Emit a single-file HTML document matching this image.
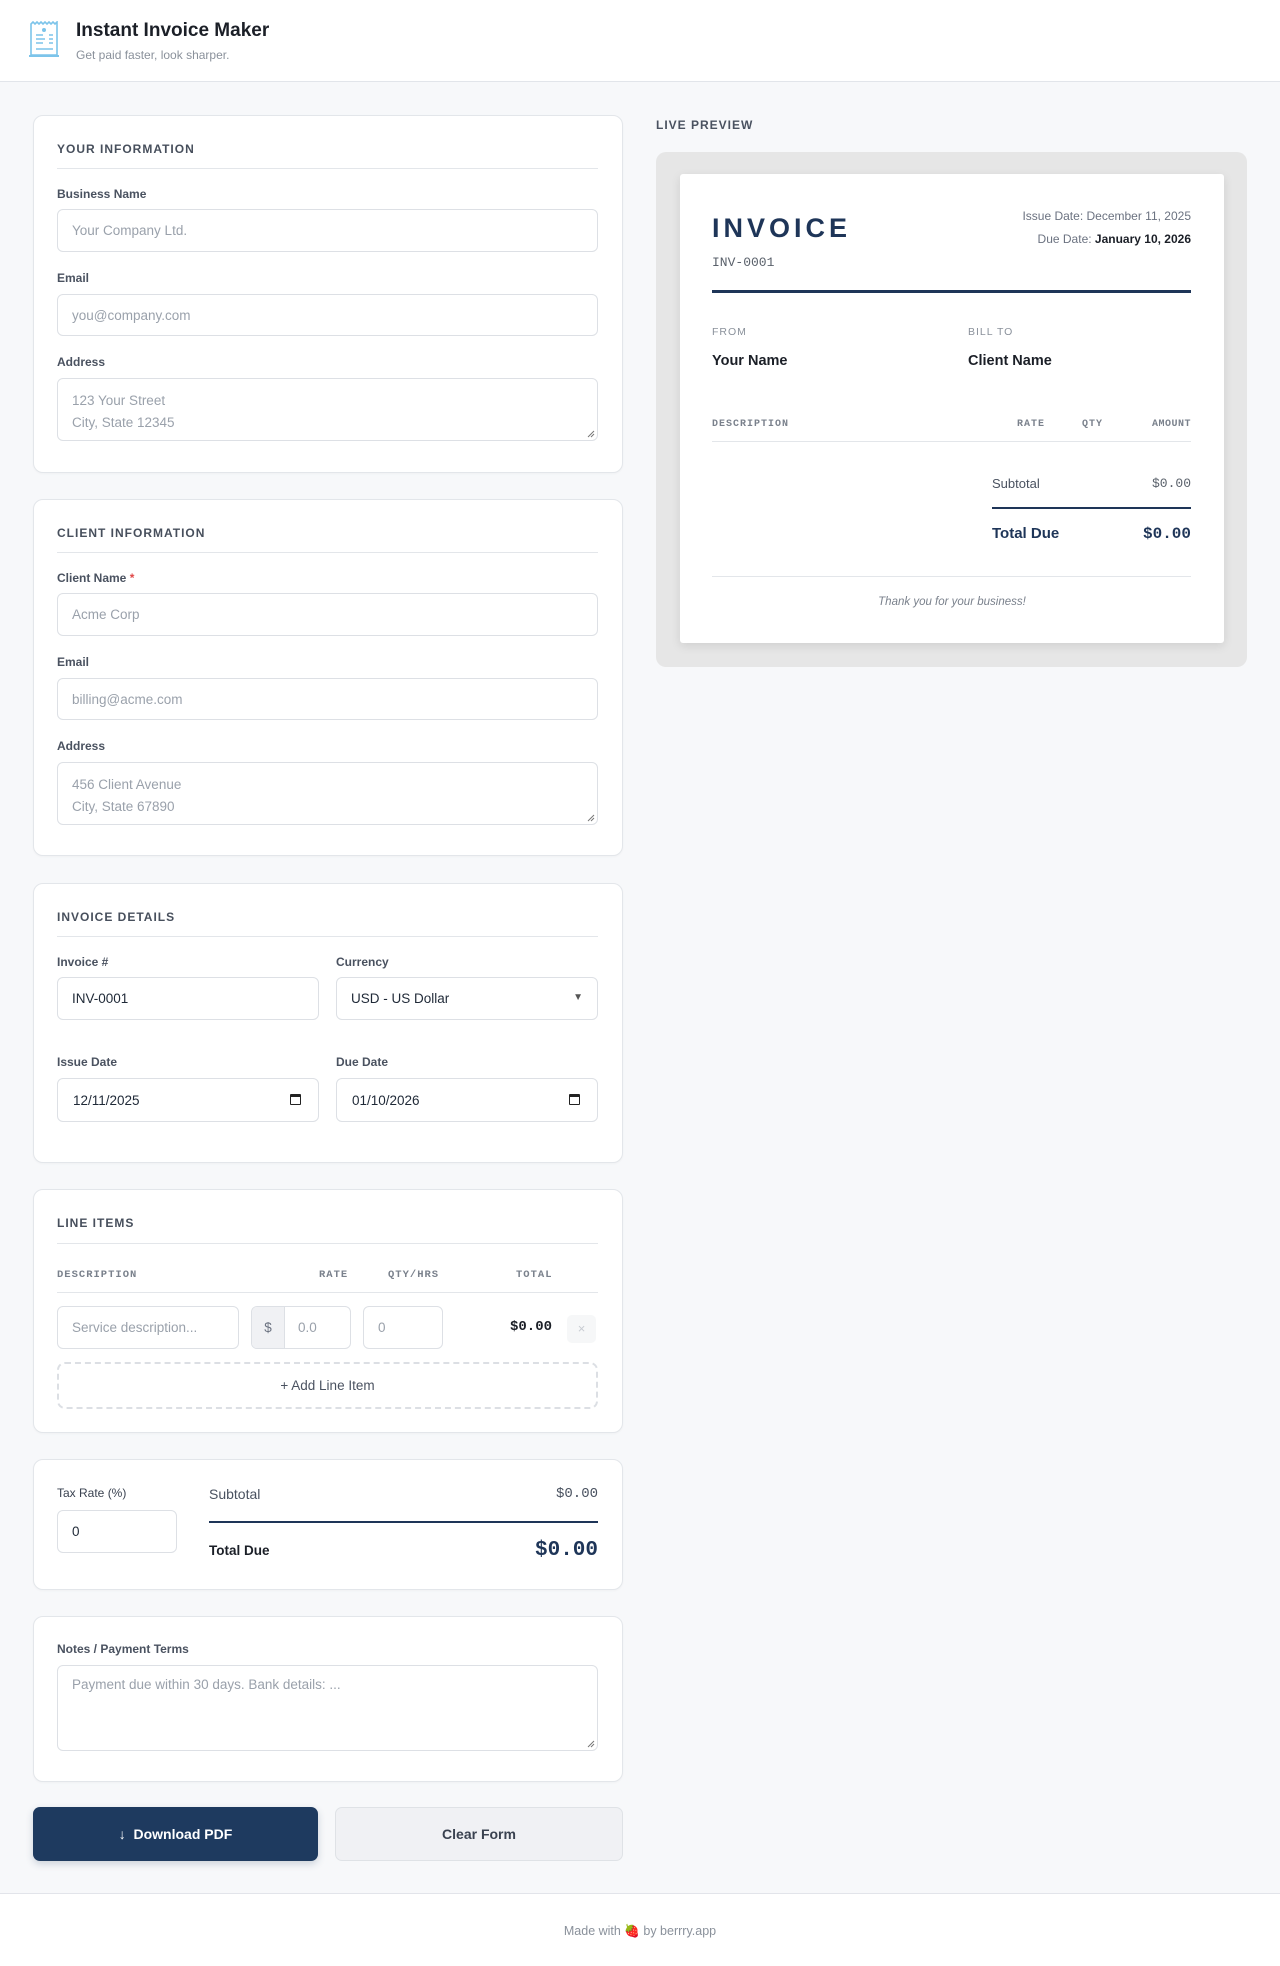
<!DOCTYPE html>
<html><head><meta charset="utf-8"><style>
*{box-sizing:border-box;margin:0;padding:0}
body{width:1280px;height:1966px;background:#f7f8fa;font-family:"Liberation Sans",sans-serif;position:relative;overflow:hidden;color:#1f2937}
.a{position:absolute;white-space:nowrap}
.hdr{position:absolute;left:0;top:0;width:1280px;height:82px;background:#fff;border-bottom:1px solid #e2e5ea}
.card{position:absolute;left:33px;width:590px;background:#fff;border:1px solid #e3e6ea;border-radius:10px;box-shadow:0 1px 2px rgba(0,0,0,.03)}
.st{position:absolute;left:57px;font-size:12px;font-weight:bold;letter-spacing:1px;color:#474f5c;line-height:20px}
.ul{position:absolute;left:57px;width:541px;height:1px;background:#e3e6ea}
.lb{position:absolute;font-size:12px;font-weight:bold;color:#4a5260;line-height:18px}
.in{position:absolute;background:#fff;border:1px solid #dde0e5;border-radius:6px;font-size:13.5px;color:#9aa1ab;padding-left:14px;display:flex;align-items:center}
.v{color:#1f2937}
.mono{font-family:"Liberation Mono",monospace}
.th{position:absolute;font-family:"Liberation Mono",monospace;font-size:10.5px;font-weight:bold;letter-spacing:1px;color:#7a818c;line-height:14px}
.grip{position:absolute;right:2px;bottom:2px}
</style></head><body>
<div class="hdr"></div>
<svg class="a" style="left:28px;top:21px" width="32" height="38" viewBox="0 0 32 38"><path d="M3 3 L5 1 L7 3 L9 1 L11 3 L13 1 L15 3 L17 1 L19 3 L21 1 L23 3 L25 1 L27 3 L29 1 L29 34 L3 34 Z" fill="#fff" stroke="#7cc4ea" stroke-width="1.6"/><circle cx="16" cy="9" r="2" fill="#7cc4ea"/><path d="M8 14h7M8 18h9M8 22h7M21 14h4M21 18h4M21 22h4M8 28h17" stroke="#7cc4ea" stroke-width="1.4"/><path d="M1 35h30" stroke="#7cc4ea" stroke-width="2"/></svg>
<div class="a" style="left:76px;top:19px;font-size:19px;font-weight:bold;color:#1b1f27;line-height:24px">Instant Invoice Maker</div>
<div class="a" style="left:76px;top:47px;font-size:12px;color:#8a919b;line-height:16px">Get paid faster, look sharper.</div>

<div class="card" style="top:115px;height:358px"></div>
<div class="st" style="top:139px">YOUR INFORMATION</div>
<div class="ul" style="top:168px"></div>
<div class="lb" style="left:57px;top:185px">Business Name</div>
<div class="in" style="left:57px;top:209px;width:541px;height:43px">Your Company Ltd.</div>
<div class="lb" style="left:57px;top:269px">Email</div>
<div class="in" style="left:57px;top:294px;width:541px;height:42px">you@company.com</div>
<div class="lb" style="left:57px;top:353px">Address</div>
<div class="in" style="left:57px;top:378px;width:541px;height:63px;align-items:flex-start;padding-top:11px;line-height:22px">123 Your Street<br>City, State 12345<svg class="grip" width="8" height="8"><path d="M1 7L7 1M4 7L7 4" stroke="#777" stroke-width="1"/></svg></div>

<div class="card" style="top:499px;height:357px"></div>
<div class="st" style="top:523px">CLIENT INFORMATION</div>
<div class="ul" style="top:552px"></div>
<div class="lb" style="left:57px;top:569px">Client Name <span style="color:#e04848">*</span></div>
<div class="in" style="left:57px;top:593px;width:541px;height:43px">Acme Corp</div>
<div class="lb" style="left:57px;top:653px">Email</div>
<div class="in" style="left:57px;top:678px;width:541px;height:42px">billing@acme.com</div>
<div class="lb" style="left:57px;top:737px">Address</div>
<div class="in" style="left:57px;top:762px;width:541px;height:63px;align-items:flex-start;padding-top:11px;line-height:22px">456 Client Avenue<br>City, State 67890<svg class="grip" width="8" height="8"><path d="M1 7L7 1M4 7L7 4" stroke="#777" stroke-width="1"/></svg></div>

<div class="card" style="top:883px;height:280px"></div>
<div class="st" style="top:907px">INVOICE DETAILS</div>
<div class="ul" style="top:936px"></div>
<div class="lb" style="left:57px;top:953px">Invoice #</div>
<div class="lb" style="left:336px;top:953px">Currency</div>
<div class="in v" style="left:57px;top:977px;width:262px;height:43px">INV-0001</div>
<div class="in v" style="left:336px;top:977px;width:262px;height:43px">USD - US Dollar<span style="position:absolute;right:14px;top:14px;font-size:10px;color:#555">▼</span></div>
<div class="lb" style="left:57px;top:1053px">Issue Date</div>
<div class="lb" style="left:336px;top:1053px">Due Date</div>
<div class="in v" style="left:57px;top:1078px;width:262px;height:44px;padding-left:15px">12/11/2025<span style="position:absolute;right:17px;top:15px;width:11px;height:11px;border:1.5px solid #222;border-top-width:3px;border-radius:1px"></span></div>
<div class="in v" style="left:336px;top:1078px;width:262px;height:44px;padding-left:15px">01/10/2026<span style="position:absolute;right:17px;top:15px;width:11px;height:11px;border:1.5px solid #222;border-top-width:3px;border-radius:1px"></span></div>

<div class="card" style="top:1189px;height:244px"></div>
<div class="st" style="top:1213px">LINE ITEMS</div>
<div class="ul" style="top:1243px"></div>
<div class="th" style="left:57px;top:1268px">DESCRIPTION</div>
<div class="th" style="left:319px;top:1268px">RATE</div>
<div class="th" style="left:388px;top:1268px">QTY/HRS</div>
<div class="th" style="left:516px;top:1268px">TOTAL</div>
<div class="ul" style="top:1292px"></div>
<div class="in" style="left:57px;top:1306px;width:182px;height:43px">Service description...</div>
<div class="in" style="left:251px;top:1306px;width:100px;height:43px;padding-left:0;overflow:hidden"><span style="width:33px;height:100%;background:#f0f1f4;border-right:1px solid #dde0e5;display:flex;align-items:center;justify-content:center;color:#6b7280">$</span><span style="padding-left:13px">0.0</span></div>
<div class="in" style="left:363px;top:1306px;width:80px;height:43px">0</div>
<div class="a mono" style="left:510px;top:1318px;font-size:14px;font-weight:bold;color:#1b1f27;line-height:18px">$0.00</div>
<div class="a" style="left:567px;top:1315px;width:29px;height:28px;background:#f6f7f8;border-radius:5px;color:#c8ccd2;font-size:13px;text-align:center;line-height:28px">×</div>
<div class="a" style="left:57px;top:1362px;width:541px;height:47px;border:2px dashed #dcdfe4;border-radius:8px;text-align:center;line-height:43px;font-size:13.5px;color:#4a5260">+ Add Line Item</div>

<div class="card" style="top:1459px;height:131px"></div>
<div class="lb" style="left:57px;top:1484px;font-weight:normal;color:#3a4250">Tax Rate (%)</div>
<div class="in v" style="left:57px;top:1510px;width:120px;height:43px">0</div>
<div class="a" style="left:209px;top:1485px;font-size:14px;color:#4a5260;line-height:18px">Subtotal</div>
<div class="a mono" style="right:682px;top:1485px;font-size:14px;color:#4a5260;line-height:18px">$0.00</div>
<div class="a" style="left:209px;top:1521px;width:389px;height:2px;background:#1e3558"></div>
<div class="a" style="left:209px;top:1542px;font-size:13.5px;font-weight:bold;color:#1b1f27;line-height:18px">Total Due</div>
<div class="a mono" style="right:682px;top:1538px;font-size:21px;font-weight:bold;color:#1e3558;line-height:26px">$0.00</div>

<div class="card" style="top:1616px;height:166px"></div>
<div class="lb" style="left:57px;top:1640px">Notes / Payment Terms</div>
<div class="in" style="left:57px;top:1665px;width:541px;height:86px;align-items:flex-start;padding-top:11px">Payment due within 30 days. Bank details: ...<svg class="grip" width="8" height="8"><path d="M1 7L7 1M4 7L7 4" stroke="#777" stroke-width="1"/></svg></div>

<div class="a" style="left:33px;top:1807px;width:285px;height:54px;background:#1e3a5f;border-radius:7px;color:#fff;font-size:14px;font-weight:bold;text-align:center;line-height:54px;box-shadow:0 3px 8px rgba(30,58,95,.2)">↓&nbsp; Download PDF</div>
<div class="a" style="left:335px;top:1807px;width:288px;height:54px;background:#f0f1f4;border:1px solid #dfe2e6;border-radius:7px;color:#3a4250;font-size:14px;font-weight:bold;text-align:center;line-height:52px">Clear Form</div>

<div class="a" style="left:0;top:1893px;width:1280px;height:73px;background:#fff;border-top:1px solid #e2e4ea"></div>
<div class="a" style="left:0;top:1922px;width:1280px;text-align:center;font-size:12.5px;color:#8a919b;line-height:18px">Made with <span style="color:#d33">🍓</span> by berrry.app</div>

<div class="a" style="left:656px;top:116px;font-size:12px;font-weight:bold;letter-spacing:1px;color:#4a5260;line-height:18px">LIVE PREVIEW</div>
<div class="a" style="left:656px;top:152px;width:591px;height:515px;background:#e6e6e6;border-radius:10px"></div>
<div class="a" style="left:680px;top:174px;width:544px;height:469px;background:#fff;border-radius:3px;box-shadow:0 3px 10px rgba(0,0,0,.1)"></div>
<div class="a" style="left:712px;top:211px;font-size:27px;font-weight:bold;letter-spacing:4px;color:#1e3558;line-height:34px">INVOICE</div>
<div class="a mono" style="left:712px;top:255px;font-size:13px;color:#5a616b;line-height:16px">INV-0001</div>
<div class="a" style="right:89px;top:208px;font-size:12px;color:#6b7280;line-height:16px">Issue Date: December 11, 2025</div>
<div class="a" style="right:89px;top:231px;font-size:12px;color:#6b7280;line-height:16px">Due Date: <b style="color:#1b1f27">January 10, 2026</b></div>
<div class="a" style="left:712px;top:290px;width:479px;height:3px;background:#1e3558"></div>
<div class="a" style="left:712px;top:326px;font-size:10.5px;letter-spacing:1px;color:#8a919b;line-height:13px">FROM</div>
<div class="a" style="left:968px;top:326px;font-size:10.5px;letter-spacing:1px;color:#8a919b;line-height:13px">BILL TO</div>
<div class="a" style="left:712px;top:352px;font-size:14.5px;font-weight:bold;color:#1b1f27;line-height:18px">Your Name</div>
<div class="a" style="left:968px;top:352px;font-size:14.5px;font-weight:bold;color:#1b1f27;line-height:18px">Client Name</div>
<div class="th" style="left:712px;top:418px;font-size:10px">DESCRIPTION</div>
<div class="th" style="left:1017px;top:418px;font-size:10px">RATE</div>
<div class="th" style="left:1082px;top:418px;font-size:10px">QTY</div>
<div class="th" style="right:89px;top:418px;font-size:10px;letter-spacing:.5px">AMOUNT</div>
<div class="a" style="left:712px;top:441px;width:479px;height:1px;background:#e3e6ea"></div>
<div class="a" style="left:992px;top:475px;font-size:13px;color:#4a5260;line-height:17px">Subtotal</div>
<div class="a mono" style="right:89px;top:475px;font-size:13px;color:#5a616b;line-height:17px">$0.00</div>
<div class="a" style="left:992px;top:507px;width:199px;height:2px;background:#1e3558"></div>
<div class="a" style="left:992px;top:524px;font-size:15px;font-weight:bold;color:#1e3558;line-height:20px">Total Due</div>
<div class="a mono" style="right:89px;top:524px;font-size:16px;font-weight:bold;color:#1e3558;line-height:20px">$0.00</div>
<div class="a" style="left:712px;top:576px;width:479px;height:1px;background:#e3e6ea"></div>
<div class="a" style="left:680px;top:595px;width:544px;text-align:center;font-size:11.5px;font-style:italic;color:#7a818c;line-height:15px">Thank you for your business!</div>
</body></html>
